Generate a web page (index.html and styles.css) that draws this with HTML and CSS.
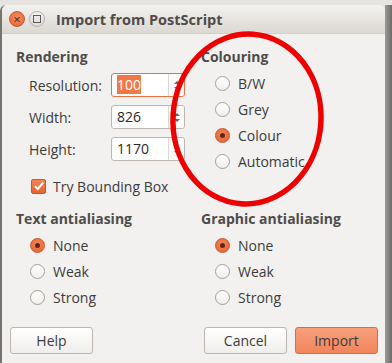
FILE: index.html
```html
<!DOCTYPE html>
<html lang="en">
<head>
    <meta charset="UTF-8">
    <title>Import from PostScript</title>
    <link rel="stylesheet" href="styles.css">
</head>
<body>

<div class="screen">
    <div class="window">
        <div class="titlebar">
            <span class="wbtn close">&times;</span>
            <span class="wbtn max"><span class="square"></span></span>
            <span class="title">Import from PostScript</span>
        </div>

        <div class="content">
            <div class="section">
                <div class="heading">Rendering</div>
                <div class="indent">
                    <div class="field">
                        <label>Resolution:</label>
                        <div class="spin focus">
                            <span class="value"><span class="selected">100</span></span>
                            <span class="arrows"><i class="up"></i><i class="down"></i></span>
                        </div>
                    </div>
                    <div class="field">
                        <label>Width:</label>
                        <div class="spin">
                            <span class="value">826</span>
                            <span class="arrows"><i class="up"></i><i class="down"></i></span>
                        </div>
                    </div>
                    <div class="field">
                        <label>Height:</label>
                        <div class="spin">
                            <span class="value">1170</span>
                            <span class="arrows"><i class="up"></i><i class="down"></i></span>
                        </div>
                    </div>
                    <div class="check-row">
                        <span class="checkbox">
                            <svg width="12" height="12" viewBox="0 0 12 12"><path d="M2 6.2 L4.8 9 L10.2 2.6" fill="none" stroke="#fff" stroke-width="2"/></svg>
                        </span>
                        <span>Try Bounding Box</span>
                    </div>
                </div>
            </div>

            <div class="section">
                <div class="heading">Colouring</div>
                <div class="indent radios">
                    <div class="radio-row"><span class="radio"></span>B/W</div>
                    <div class="radio-row"><span class="radio"></span>Grey</div>
                    <div class="radio-row"><span class="radio on"></span>Colour</div>
                    <div class="radio-row"><span class="radio"></span>Automatic</div>
                </div>
            </div>

            <div class="section lower">
                <div class="heading">Text antialiasing</div>
                <div class="indent radios">
                    <div class="radio-row"><span class="radio on"></span>None</div>
                    <div class="radio-row"><span class="radio"></span>Weak</div>
                    <div class="radio-row"><span class="radio"></span>Strong</div>
                </div>
            </div>

            <div class="section lower">
                <div class="heading">Graphic antialiasing</div>
                <div class="indent radios">
                    <div class="radio-row"><span class="radio on"></span>None</div>
                    <div class="radio-row"><span class="radio"></span>Weak</div>
                    <div class="radio-row"><span class="radio"></span>Strong</div>
                </div>
            </div>
        </div>

        <div class="buttons">
            <button class="btn">Help</button>
            <span class="spacer"></span>
            <button class="btn">Cancel</button>
            <button class="btn primary">Import</button>
        </div>

        <svg class="mark" width="160" height="184" viewBox="0 0 160 184">
            <ellipse cx="80" cy="92" rx="74" ry="85" transform="rotate(4 80 92)" fill="none" stroke="#ee0000" stroke-width="5.5"/>
        </svg>
    </div>
    <div class="shadow"></div>
</div>

</body>
</html>
```

FILE: styles.css
```css
body {
    margin: 0;
    background: #e6e4e1;
    font-family: 'Open Sans', sans-serif;
    font-size: 14px;
    color: #3c3c3c;
}
.screen {
    display: flex;
    height: 363px;
    padding-top: 5px;
    box-sizing: border-box;
    overflow: hidden;
}
.window {
    position: relative;
    width: 383px;
    border-left: 2px solid #77746f;
    background: #f2f1f0;
    border-radius: 6px 6px 0 0;
}
.shadow {
    flex: 1;
    background: linear-gradient(to right, #9c9a97, #6c6b69);
}
.titlebar {
    height: 28px;
    display: flex;
    align-items: center;
    padding-left: 7px;
    background: linear-gradient(#f3f2f0, #dcd8d2);
    border-radius: 6px 6px 0 0;
    border-bottom: 1px solid #d3cfc9;
}
.wbtn {
    width: 16px;
    height: 16px;
    border-radius: 50%;
    box-sizing: border-box;
    display: flex;
    align-items: center;
    justify-content: center;
    margin-right: 4px;
}
.close {
    background: radial-gradient(circle at 50% 40%, #f58d62, #e5612f);
    border: 1px solid #c9582f;
    color: #5b2613;
    font-size: 13px;
    line-height: 1;
}
.max {
    background: linear-gradient(#f4f3f1, #dedad5);
    border: 1px solid #b6b1aa;
}
.square {
    width: 6px;
    height: 6px;
    border: 1px solid #5f5c58;
}
.title {
    margin-left: 7px;
    font-weight: bold;
    font-size: 14.5px;
    color: #4f4c49;
}
.content {
    display: grid;
    grid-template-columns: 185px 1fr;
    padding: 14px 0 0 14px;
}
.heading {
    font-weight: bold;
    color: #4f4c49;
    height: 18px;
    line-height: 18px;
}
.indent {
    padding-left: 13px;
}
.field {
    display: flex;
    align-items: center;
    height: 24px;
    margin-top: 8px;
}
.field:first-child {
    margin-top: 7px;
}
.field label {
    width: 82px;
}
.spin {
    display: flex;
    width: 74px;
    height: 24px;
    box-sizing: border-box;
    border: 1px solid #bdb7b0;
    border-radius: 3px;
    background: #fff;
}
.spin.focus {
    border-color: #e9713f;
}
.value {
    flex: 1;
    padding-left: 5px;
    line-height: 22px;
    color: #2a2a2a;
}
.selected {
    background: #f07746;
    color: #fff;
}
.arrows {
    width: 15px;
    border-left: 1px solid #dcd8d3;
    background: #fbfaf9;
    display: flex;
    flex-direction: column;
    align-items: center;
    justify-content: center;
    gap: 3px;
    border-radius: 0 3px 3px 0;
}
.arrows i {
    width: 0;
    height: 0;
    border-left: 3px solid transparent;
    border-right: 3px solid transparent;
}
.arrows .up {
    border-bottom: 3px solid #6b6864;
}
.arrows .down {
    border-top: 3px solid #6b6864;
}
.check-row {
    display: flex;
    align-items: center;
    height: 18px;
    margin-top: 16px;
    margin-left: 2px;
}
.checkbox {
    width: 15px;
    height: 15px;
    box-sizing: border-box;
    border: 1px solid #c55a31;
    border-radius: 2px;
    background: linear-gradient(#f28558, #e4632f);
    display: flex;
    align-items: center;
    justify-content: center;
    margin-right: 7px;
}
.radios {
    padding-top: 4px;
    padding-left: 14px;
}
.radio-row {
    display: flex;
    align-items: center;
    height: 26px;
}
.radio {
    width: 15px;
    height: 15px;
    box-sizing: border-box;
    border-radius: 50%;
    border: 1px solid #a79f97;
    background: linear-gradient(#ffffff, #f1efed);
    margin-right: 8px;
    display: flex;
    align-items: center;
    justify-content: center;
}
.radio.on {
    border-color: #c9572d;
    background: radial-gradient(circle at 50% 40%, #f5875a, #e4602d);
}
.radio.on::after {
    content: "";
    width: 5px;
    height: 5px;
    border-radius: 50%;
    background: #5e2a17;
}
.lower {
    margin-top: 15px;
}
.buttons {
    display: flex;
    padding: 17px 7px 0 8px;
    gap: 8px;
}
.spacer {
    flex: 1;
}
.btn {
    width: 83px;
    height: 27px;
    font-family: inherit;
    font-size: 14px;
    color: #3c3c3c;
    border: 1px solid #bdb6ae;
    border-radius: 3px;
    background: linear-gradient(#ffffff, #f0eeec);
    padding: 0;
}
.btn.primary {
    border-color: #d56f49;
    background: linear-gradient(#f7a07c, #f2845c);
}
.mark {
    position: absolute;
    left: 165px;
    top: 22px;
}
```
